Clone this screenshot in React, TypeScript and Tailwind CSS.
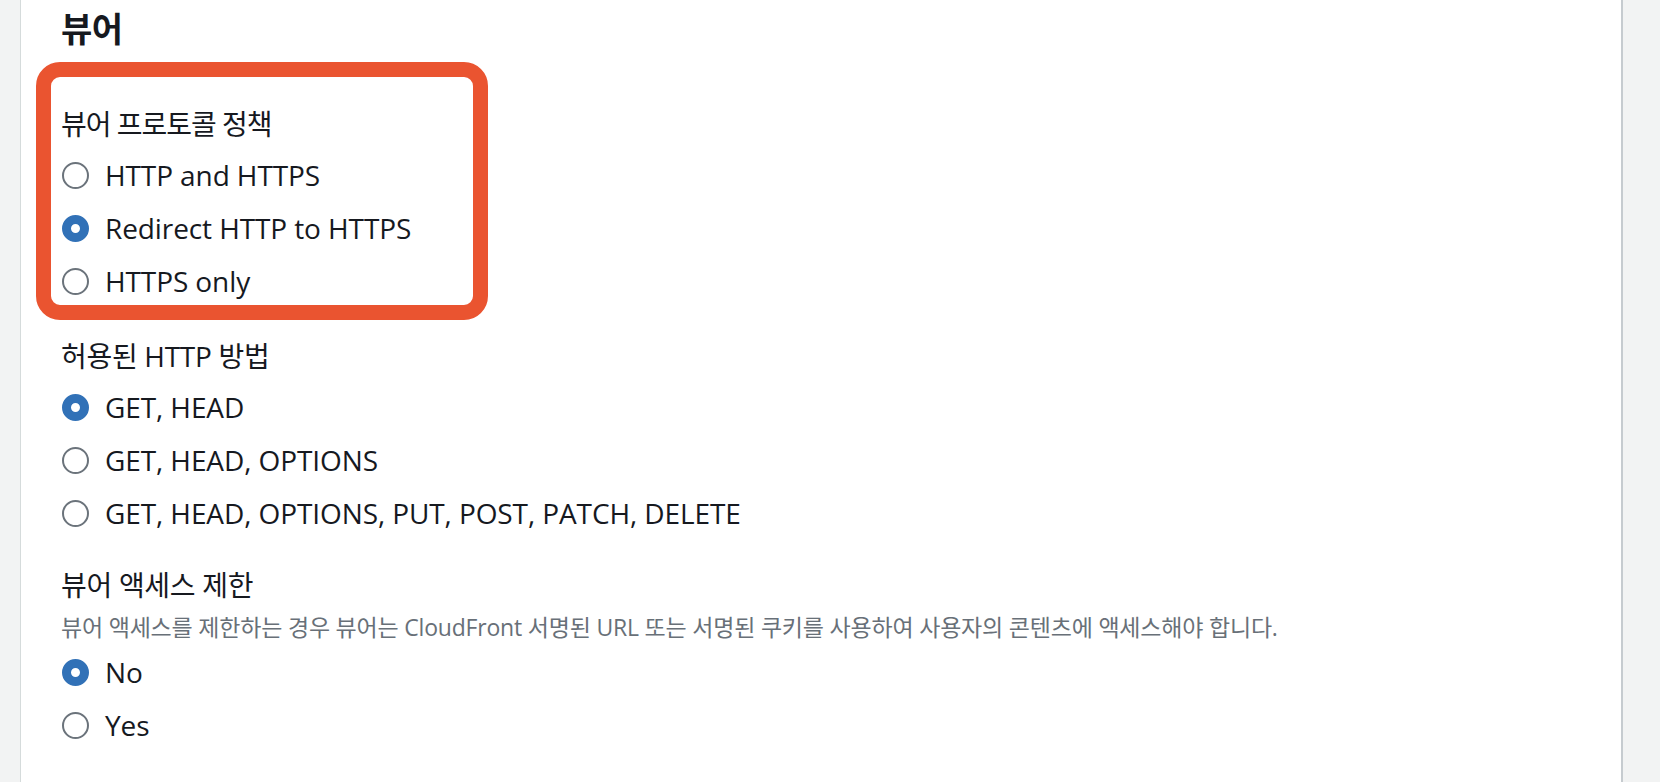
const font = "font-['Open_Sans','Noto_Sans_CJK_KR',sans-serif]";

interface RadioProps {
  label: string;
  checked?: boolean;
}

function Radio({ label, checked }: RadioProps) {
  return (
    <div className="flex items-center h-[44px]">
      {checked ? (
        <span className="ml-[1px] w-[27px] h-[27px] rounded-full border-[9px] border-[#3171b7] bg-white shrink-0" />
      ) : (
        <span className="ml-[1px] w-[27px] h-[27px] rounded-full border-[2.5px] border-[#6b737b] bg-white shrink-0" />
      )}
      <span className="ml-[16px] text-[28px] leading-[44px] tracking-[-0.1px] text-[#16191f]">{label}</span>
    </div>
  );
}

function FieldLabel({ children, tight }: { children: React.ReactNode; tight?: boolean }) {
  return (
    <div
      className={
        tight
          ? "h-[44px] text-[28px] leading-[44px] tracking-[-1px] text-[#16191f]"
          : "h-[44px] text-[28px] leading-[44px] tracking-[-0.3px] text-[#16191f]"
      }
    >
      {children}
    </div>
  );
}

export default function App() {
  return (
    <div className={`${font} w-[1660px] h-[782px] overflow-hidden bg-[#f2f3f3] flex pl-[20px]`}>
      <div className="w-[1603px] h-full bg-white border-l border-[#d5dbdb] border-r-2 border-r-[#c6cbcf] pl-[40px] pt-[9px]">
        {/* Section heading */}
        <h2 className="h-[40px] text-[34px] leading-[40px] font-bold tracking-[-0.5px] text-[#16191f]">뷰어</h2>

        {/* Viewer protocol policy (highlighted) */}
        <div className="mt-[13px] -ml-[25px] w-[452px] border-[15px] border-[#ea5430] rounded-[24px] pl-[10px] pt-[25px] pb-[2px]">
          <div className="mb-[7px]">
            <FieldLabel tight>뷰어 프로토콜 정책</FieldLabel>
          </div>
          <div className="flex flex-col gap-[9px]">
            <Radio label="HTTP and HTTPS" />
            <Radio label="Redirect HTTP to HTTPS" checked />
            <Radio label="HTTPS only" />
          </div>
        </div>

        {/* Allowed HTTP methods */}
        <div className="mt-[14px] mb-[7px]">
          <FieldLabel>허용된 HTTP 방법</FieldLabel>
        </div>
        <div className="flex flex-col gap-[9px]">
          <Radio label="GET, HEAD" checked />
          <Radio label="GET, HEAD, OPTIONS" />
          <Radio label="GET, HEAD, OPTIONS, PUT, POST, PATCH, DELETE" />
        </div>

        {/* Restrict viewer access */}
        <div className="mt-[28px]">
          <FieldLabel>뷰어 액세스 제한</FieldLabel>
        </div>
        <p className="mt-[4px] h-[32px] text-[23px] leading-[32px] tracking-[-0.2px] text-[#687078]">
          뷰어 액세스를 제한하는 경우 뷰어는 CloudFront 서명된 URL 또는 서명된 쿠키를 사용하여 사용자의 콘텐츠에 액세스해야 합니다.
        </p>
        <div className="mt-[7px] flex flex-col gap-[9px]">
          <Radio label="No" checked />
          <Radio label="Yes" />
        </div>
      </div>
    </div>
  );
}
